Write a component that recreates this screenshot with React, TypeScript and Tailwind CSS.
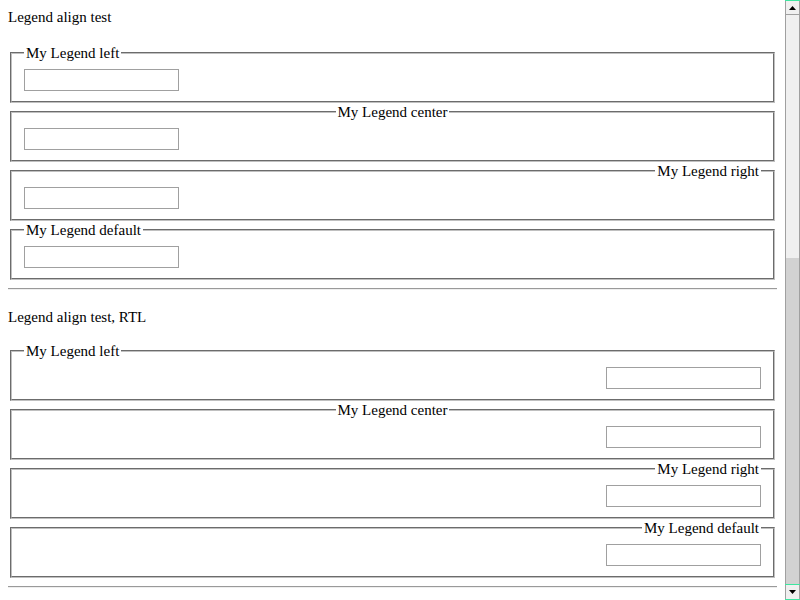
const ALIGNS = [
  { label: "left", legend: "mr-auto" },
  { label: "center", legend: "mx-auto" },
  { label: "right", legend: "ml-auto" },
  { label: "default", legend: "" },
];

function LegendBox({ label, legend, rtl }: { label: string; legend: string; rtl?: boolean }) {
  return (
    <fieldset
      dir={rtl ? "rtl" : "ltr"}
      className="mx-[2px] border-2 border-[#c0c0c0] [border-style:groove] px-[12px] pt-[7px] pb-[10px]"
    >
      <legend dir="ltr" className={`px-[2px] leading-[18px] ${legend}`}>My Legend {label}</legend>
      <input type="text" className="block h-[22px] w-[155px] border border-[#a0a0a0] bg-white" />
    </fieldset>
  );
}

function Section({ title, rtl, gap }: { title: string; rtl?: boolean; gap: string }) {
  return (
    <>
      <div className="leading-[18px]">{title}</div>
      <div className={gap}>
        {ALIGNS.map((a) => (
          <LegendBox key={a.label} label={a.label} legend={rtl && a.label === "default" ? "ml-auto" : a.legend} rtl={rtl} />
        ))}
      </div>
      <hr className="my-[8px] h-0 border-0 border-t border-b border-t-[#9a9a9a] border-b-[#eeeeee]" />
    </>
  );
}

function Scrollbar() {
  return (
    <div className="flex h-full w-[15px] shrink-0 flex-col">
      <div className="h-px bg-[#3ee6a0]" />
      <div className="flex h-[14px] items-center justify-center border-x border-b border-[#a0a0a0] bg-[#f0f0f0]">
        <svg width="7" height="4" viewBox="0 0 7 4"><path d="M0 4 L3.5 0 L7 4 Z" fill="#000" /></svg>
      </div>
      <div className="h-[243px] border-x border-[#a0a0a0] bg-[#f0f0f0]" />
      <div className="flex-1 border-x border-[#a0a0a0] bg-[#d2d2d2]" />
      <div className="h-px bg-[#3ee6a0]" />
      <div className="flex h-[14px] items-center justify-center border-x border-[#a0a0a0] bg-[#f0f0f0]">
        <svg width="7" height="4" viewBox="0 0 7 4"><path d="M0 0 L7 0 L3.5 4 Z" fill="#000" /></svg>
      </div>
      <div className="h-px bg-[#3ee6a0]" />
    </div>
  );
}

export default function App() {
  return (
    <div className="flex h-[600px] w-[800px] overflow-hidden bg-white font-['Liberation_Serif',serif] text-[15px] text-black">
      <div className="min-w-0 flex-1 overflow-hidden p-[8px]">
        <Section title="Legend align test" gap="mt-[18px]" />
        <div className="mt-[18px]">
          <Section title="Legend align test, RTL" rtl gap="mt-[16px]" />
        </div>
      </div>
      <Scrollbar />
    </div>
  );
}
